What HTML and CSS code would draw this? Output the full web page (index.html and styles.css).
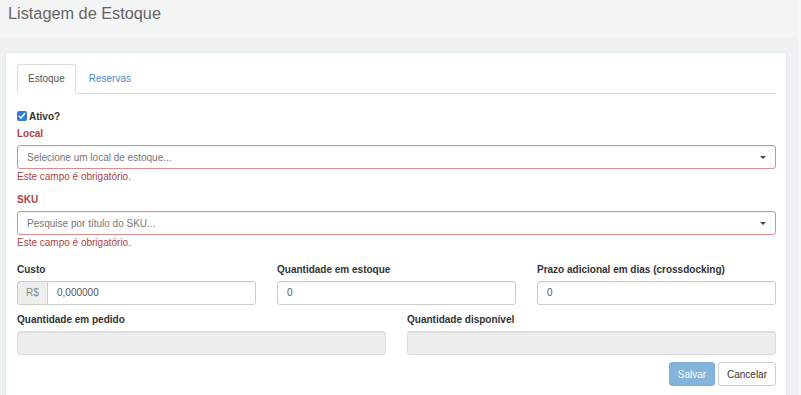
FILE: index.html
```html
<!DOCTYPE html>
<html lang="pt-BR">
<head>
<meta charset="utf-8">
<title>Listagem de Estoque</title>
<link rel="stylesheet" href="styles.css">
</head>
<body>
<div class="page">
  <header class="page-header">
    <h1 class="page-title">Listagem de Estoque</h1>
  </header>
  <main class="content">
    <section class="card">
      <ul class="tabs">
        <li class="tab active">Estoque</li>
        <li class="tab">Reservas</li>
      </ul>
      <form class="tab-pane">
        <label class="check"><input type="checkbox" checked class="check-box"><span>Ativo?</span></label>

        <div class="group has-error">
          <label class="label">Local</label>
          <div class="select">
            <span class="placeholder">Selecione um local de estoque...</span>
            <span class="caret"></span>
          </div>
          <div class="help">Este campo é obrigatório.</div>
        </div>

        <div class="group has-error">
          <label class="label">SKU</label>
          <div class="select">
            <span class="placeholder">Pesquise por título do SKU...</span>
            <span class="caret"></span>
          </div>
          <div class="help">Este campo é obrigatório.</div>
        </div>

        <div class="row three">
          <div class="field">
            <label class="label">Custo</label>
            <div class="input-group">
              <span class="addon">R$</span>
              <div class="input grouped">0,000000</div>
            </div>
          </div>
          <div class="field">
            <label class="label">Quantidade em estoque</label>
            <div class="input">0</div>
          </div>
          <div class="field">
            <label class="label">Prazo adicional em dias (crossdocking)</label>
            <div class="input">0</div>
          </div>
        </div>

        <div class="row two">
          <div class="field">
            <label class="label">Quantidade em pedido</label>
            <div class="input disabled"></div>
          </div>
          <div class="field">
            <label class="label">Quantidade disponível</label>
            <div class="input disabled"></div>
          </div>
        </div>

        <div class="actions">
          <button type="button" class="btn btn-primary" disabled>Salvar</button>
          <button type="button" class="btn btn-default">Cancelar</button>
        </div>
      </form>
    </section>
  </main>
</div>
</body>
</html>
```

FILE: styles.css
```css
* { box-sizing: border-box; }

html, body {
  margin: 0;
  padding: 0;
  height: 100%;
  overflow: hidden;
}

body {
  background: #f6f7f7;
  font-family: "Liberation Sans", Arial, sans-serif;
  font-size: 10px;
  color: #333;
}

.page {
  width: 798px;
  min-height: 100%;
  background: #eef1f2;
}

.page-header {
  height: 37px;
  background: #f4f5f5;
  padding: 2px 8px 0;
}

.page-title {
  margin: 0;
  font-size: 16.3px;
  font-weight: normal;
  line-height: 22px;
  color: #666;
}

.content {
  padding: 16px 12px 0 6px;
}

.card {
  background: #fff;
  border-radius: 3px;
  box-shadow: 0 0 2px rgba(0, 0, 0, 0.12);
  padding: 11px 10px 20px 11px;
  min-height: 360px;
}

.tabs {
  list-style: none;
  margin: 0;
  padding: 0;
  display: flex;
  border-bottom: 1px solid #ddd;
  height: 30px;
}

.tab {
  height: 30px;
  padding: 0 10px;
  line-height: 28px;
  margin-right: 2px;
  border: 1px solid transparent;
  border-radius: 3px 3px 0 0;
  color: #4a88cc;
}

.tab.active {
  color: #555;
  background: #fff;
  border-color: #ddd #ddd transparent;
}

.tab-pane {
  padding-top: 15px;
}

.check {
  display: flex;
  align-items: center;
  height: 14px;
  font-weight: bold;
  color: #333;
}

.check-box {
  width: 10px;
  height: 10px;
  margin: 0 2px 0 0;
  accent-color: #2f7ad8;
}

.label {
  display: block;
  font-weight: bold;
  line-height: 14px;
  padding-top: 1px;
  margin-bottom: 4px;
}

.group {
  margin-bottom: 8px;
}

.check + .group {
  margin-top: 3px;
}

.has-error .label,
.help {
  color: #a94442;
}

.help {
  line-height: 15px;
}

.select {
  height: 24px;
  border: 1px solid #dc8e8e;
  border-radius: 3px;
  display: flex;
  align-items: center;
  justify-content: space-between;
  padding: 0 9px 0 9px;
  box-shadow: inset 0 1px 1px rgba(0, 0, 0, 0.05);
}

.placeholder {
  color: #777;
}

.caret {
  width: 0;
  height: 0;
  border-left: 3px solid transparent;
  border-right: 3px solid transparent;
  border-top: 3px solid #444;
}

.row {
  display: grid;
  column-gap: 21px;
  margin-bottom: 7px;
}

.row.three {
  grid-template-columns: 1fr 1fr 1fr;
  margin-top: 12px;
}

.row.two {
  grid-template-columns: 1fr 1fr;
}

.input {
  height: 24px;
  border: 1px solid #ccc;
  border-radius: 3px;
  padding: 0 9px;
  line-height: 22px;
  color: #555;
  box-shadow: inset 0 1px 1px rgba(0, 0, 0, 0.05);
}

.input.disabled {
  background: #eee;
  border-color: #ddd;
}

.input-group {
  display: flex;
}

.addon {
  width: 30px;
  height: 24px;
  background: #eee;
  border: 1px solid #ccc;
  border-right: 0;
  border-radius: 3px 0 0 3px;
  text-align: center;
  line-height: 22px;
  color: #888;
}

.input.grouped {
  flex: 1;
  border-radius: 0 3px 3px 0;
}

.actions {
  display: flex;
  justify-content: flex-end;
  gap: 3px;
}

.btn {
  height: 24px;
  padding: 0 9px;
  font-family: inherit;
  font-size: 10px;
  border-radius: 3px;
  border: 1px solid #ccc;
  background: #fff;
  color: #333;
}

.btn-primary {
  background: #84b3dc;
  border-color: #7eaedb;
  color: #fff;
  width: 46px;
  padding: 0;
}

.btn-default {
  width: 58px;
  padding: 0;
}
```
